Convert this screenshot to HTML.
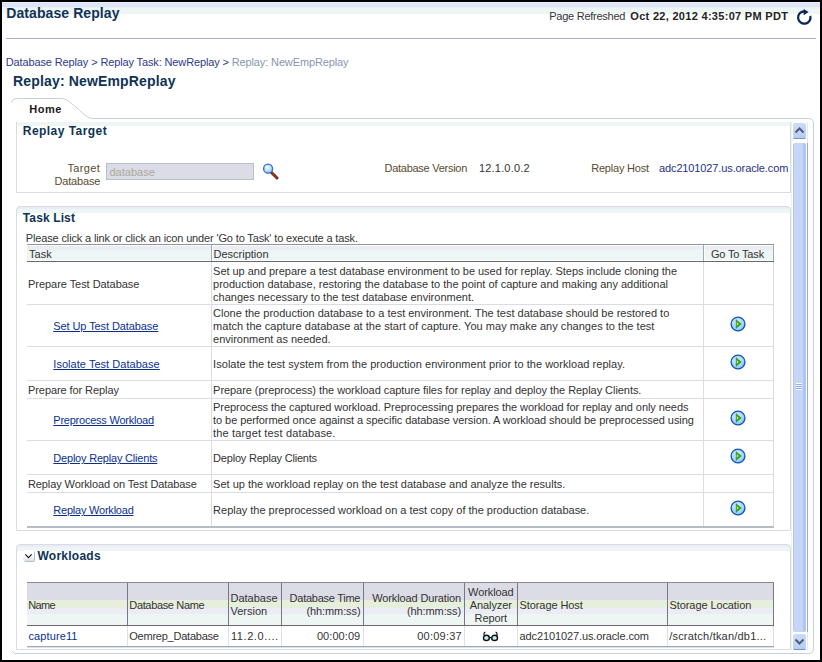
<!DOCTYPE html>
<html><head><meta charset="utf-8"><title>Database Replay</title>
<style>
html,body{margin:0;padding:0;}
body{width:822px;height:662px;overflow:hidden;position:relative;background:#fff;font-family:"Liberation Sans",sans-serif;}
.t{position:absolute;white-space:nowrap;}
#frame{position:absolute;left:0;top:0;width:822px;height:662px;box-sizing:border-box;border:2px solid #000;z-index:10;pointer-events:none}
</style></head><body>
<div style="position:absolute;left:2px;top:2px;width:818px;height:1px;background:#e9f0fb"></div>
<div style="position:absolute;left:2px;top:3px;width:818px;height:4px;background:#dde6f6"></div>
<div style="position:absolute;left:2px;top:7px;width:818px;height:1px;background:#eceef4"></div>
<div style="position:absolute;left:2px;top:8px;width:818px;height:6px;background:#eef6f4"></div>
<div class="t" style="left:6.30px;top:4.65px;font-size:14px;line-height:17px;font-weight:bold;color:#0e3356;letter-spacing:0.08px;">Database Replay</div>
<div class="t" style="left:549.20px;top:9.89px;font-size:11px;line-height:13px;font-weight:normal;color:#333340;letter-spacing:-0.25px;">Page Refreshed</div>
<div class="t" style="left:630.30px;top:9.89px;font-size:11px;line-height:13px;font-weight:bold;color:#222;letter-spacing:0.3px;">Oct 22, 2012 4:35:07 PM PDT</div>
<svg style="position:absolute;left:796px;top:9px" width="17" height="17" viewBox="0 0 17 17"><path d="M14.3 6.9 A6.2 6.2 0 1 1 8.3 2.3" fill="none" stroke="#0a2556" stroke-width="2.2"/><path d="M7.6 0 L12.6 3.1 L7.6 6.2 Z" fill="#0a2556"/></svg>
<div style="position:absolute;left:6px;top:38px;width:810px;height:1px;background:#aeaacc"></div>
<div class="t" style="left:5.80px;top:55.69px;font-size:11px;line-height:13px;font-weight:normal;color:#2e3a8c;letter-spacing:-0.13px;">Database Replay &gt; Replay Task: NewReplay &gt; <span style="color:#8a94b4">Replay: NewEmpReplay</span></div>
<div class="t" style="left:13.10px;top:72.85px;font-size:14px;line-height:17px;font-weight:bold;color:#0f3354;letter-spacing:0.15px;">Replay: NewEmpReplay</div>
<svg style="position:absolute;left:0;top:0" width="822" height="662" viewBox="0 0 822 662">
<path d="M11.5 102.5 Q12 98.5 16.5 98.5 L61 98.5 C66 98.5 70 102 77 108 C84 114 87 118.5 92.5 118.5 L808.5 118.5 Q813.5 118.5 813.5 123.5 L813.5 648.5 Q813.5 653.5 808.5 653.5 L14.5 653.5 L11.5 650.5" fill="none" stroke="#c5cfdd" stroke-width="1"/>
</svg>
<div class="t" style="left:29.30px;top:102.69px;font-size:11px;line-height:13px;font-weight:bold;color:#1a1a1a;letter-spacing:0.5px;">Home</div>
<div style="position:absolute;left:16px;top:122px;width:773px;height:69px;border:1px solid #d8dae6;background:linear-gradient(#ececf6 0,#ececf6 0px,#eef5f5 0px,#eef5f5 3px,#fff 3px)"></div>
<div style="position:absolute;left:17px;top:122px;width:773px;height:1px;background:#eef5f5"></div>
<div class="t" style="left:22.80px;top:123.64px;font-size:12px;line-height:14px;font-weight:bold;color:#0f3354;letter-spacing:0.45px;">Replay Target</div>
<div class="t" style="right:721.80px;top:161.89px;font-size:11px;line-height:13px;font-weight:normal;color:#5a4a32;letter-spacing:0.36px;">Target</div>
<div class="t" style="right:721.80px;top:174.89px;font-size:11px;line-height:13px;font-weight:normal;color:#5a4a32;letter-spacing:-0.17px;">Database</div>
<div style="position:absolute;left:106px;top:163px;width:148px;height:17px;box-sizing:border-box;border:1px solid #b7bfcb;background:#dcdce6"></div>
<div class="t" style="left:109.50px;top:165.89px;font-size:11px;line-height:13px;font-weight:normal;color:#aca89e;letter-spacing:0px;">database</div>
<svg style="position:absolute;left:260px;top:160px" width="20" height="20" viewBox="0 0 20 20"><defs><radialGradient id="mg" cx="0.4" cy="0.35" r="0.7"><stop offset="0" stop-color="#f4faff"/><stop offset="1" stop-color="#8cc4f0"/></radialGradient></defs><line x1="11.5" y1="12.5" x2="17" y2="18" stroke="#7a2a14" stroke-width="3" stroke-linecap="round"/><line x1="12" y1="13" x2="16.5" y2="17.5" stroke="#c07050" stroke-width="0.8" stroke-dasharray="1 1"/><circle cx="8.1" cy="8.7" r="4.5" fill="url(#mg)" stroke="#2f6ccc" stroke-width="1.3"/></svg>
<div class="t" style="left:384.50px;top:161.89px;font-size:11px;line-height:13px;font-weight:normal;color:#5a4a32;letter-spacing:-0.27px;">Database Version</div>
<div class="t" style="left:479.00px;top:161.89px;font-size:11px;line-height:13px;font-weight:normal;color:#333;letter-spacing:0.18px;">12.1.0.0.2</div>
<div class="t" style="left:591.20px;top:161.89px;font-size:11px;line-height:13px;font-weight:normal;color:#5a4a32;letter-spacing:-0.2px;">Replay Host</div>
<div class="t" style="left:659.00px;top:161.89px;font-size:11px;line-height:13px;font-weight:normal;color:#1f3286;letter-spacing:-0.12px;">adc2101027.us.oracle.com</div>
<div style="position:absolute;left:16px;top:206px;width:773px;height:323px;border:1px solid #d8dae6;border-radius:4px 4px 0 0;background:linear-gradient(#ececf6 0,#ececf6 2px,#eef5f5 2px,#eef5f5 6px,#fff 6px)"></div>
<div class="t" style="left:22.80px;top:210.84px;font-size:12px;line-height:14px;font-weight:bold;color:#0f3354;letter-spacing:0.12px;">Task List</div>
<div class="t" style="left:25.80px;top:231.69px;font-size:11px;line-height:13px;font-weight:normal;color:#333;letter-spacing:-0.144px;">Please click a link or click an icon under &#x27;Go to Task&#x27; to execute a task.</div>
<div style="position:absolute;left:27px;top:244px;width:747px;height:1px;background:#8d9794"></div>
<div style="position:absolute;left:27px;top:245px;width:747px;height:1px;background:#ffffff"></div>
<div style="position:absolute;left:27px;top:246px;width:747px;height:4px;background:#ececf4"></div>
<div style="position:absolute;left:27px;top:250px;width:747px;height:10px;background:#eef5f5"></div>
<div style="position:absolute;left:27px;top:260px;width:747px;height:1px;background:#ffffff"></div>
<div style="position:absolute;left:212px;top:245px;width:1px;height:16px;background:#fff"></div>
<div style="position:absolute;left:704px;top:245px;width:1px;height:16px;background:#fff"></div>
<div style="position:absolute;left:27px;top:261px;width:747px;height:1px;background:#6c6679"></div>
<div style="position:absolute;left:211px;top:245px;width:1px;height:16px;background:#a8a8b8"></div>
<div style="position:absolute;left:703px;top:245px;width:1px;height:16px;background:#a8a8b8"></div>
<div style="position:absolute;left:773px;top:245px;width:1px;height:16px;background:#a8a8b8"></div>
<div class="t" style="left:29.10px;top:247.59px;font-size:11px;line-height:13px;font-weight:normal;color:#333;letter-spacing:0px;">Task</div>
<div class="t" style="left:213.50px;top:247.59px;font-size:11px;line-height:13px;font-weight:normal;color:#333;letter-spacing:0px;">Description</div>
<div class="t" style="left:710.90px;top:247.59px;font-size:11px;line-height:13px;font-weight:normal;color:#333;letter-spacing:-0.15px;">Go To Task</div>
<div style="position:absolute;left:27px;top:304px;width:747px;height:1px;background:#dcdce6"></div>
<div style="position:absolute;left:211px;top:262px;width:1px;height:42px;background:#dcdce6"></div>
<div style="position:absolute;left:703px;top:262px;width:1px;height:42px;background:#dcdce6"></div>
<div style="position:absolute;left:773px;top:262px;width:1px;height:42px;background:#dcdce6"></div>
<div class="t" style="left:28.00px;top:277.99px;font-size:11px;line-height:13px;font-weight:normal;color:#333;letter-spacing:-0.045px;">Prepare Test Database</div>
<div class="t" style="left:213.10px;top:264.99px;font-size:11px;line-height:13px;font-weight:normal;color:#333;letter-spacing:-0.032px;">Set up and prepare a test database environment to be used for replay. Steps include cloning the</div>
<div class="t" style="left:213.10px;top:277.99px;font-size:11px;line-height:13px;font-weight:normal;color:#333;letter-spacing:-0.008px;">production database, restoring the database to the point of capture and making any additional</div>
<div class="t" style="left:213.10px;top:290.99px;font-size:11px;line-height:13px;font-weight:normal;color:#333;letter-spacing:-0.004px;">changes necessary to the test database environment.</div>
<div style="position:absolute;left:27px;top:346px;width:747px;height:1px;background:#dcdce6"></div>
<div style="position:absolute;left:211px;top:305px;width:1px;height:41px;background:#dcdce6"></div>
<div style="position:absolute;left:703px;top:305px;width:1px;height:41px;background:#dcdce6"></div>
<div style="position:absolute;left:773px;top:305px;width:1px;height:41px;background:#dcdce6"></div>
<div class="t" style="left:53.30px;top:320.49px;font-size:11px;line-height:13px;font-weight:normal;color:#0b2f8f;letter-spacing:-0.09px;text-decoration:underline;">Set Up Test Database</div>
<div class="t" style="left:213.10px;top:307.49px;font-size:11px;line-height:13px;font-weight:normal;color:#333;letter-spacing:0.002px;">Clone the production database to a test environment. The test database should be restored to</div>
<div class="t" style="left:213.10px;top:320.49px;font-size:11px;line-height:13px;font-weight:normal;color:#333;letter-spacing:0.033px;">match the capture database at the start of capture. You may make any changes to the test</div>
<div class="t" style="left:213.10px;top:333.49px;font-size:11px;line-height:13px;font-weight:normal;color:#333;letter-spacing:-0.026px;">environment as needed.</div>
<svg style="position:absolute;left:728.7px;top:314.5px" width="18" height="18" viewBox="0 0 18 18"><defs><radialGradient id="g305" cx="0.45" cy="0.4" r="0.65"><stop offset="0" stop-color="#e4f4ff"/><stop offset="0.7" stop-color="#9ad2f6"/><stop offset="1" stop-color="#78bcf0"/></radialGradient></defs><circle cx="9.4" cy="9.5" r="7.2" fill="#a0a8b8" opacity="0.35"/><circle cx="9" cy="9" r="6.9" fill="url(#g305)" stroke="#1452c4" stroke-width="1.3"/><path d="M7.1 4.7 L12.3 9 L7.1 13.3 Z" fill="#3aa61c" stroke="#1f7c12" stroke-width="0.5"/><path d="M7.9 7.3 L9.6 8.9 L7.9 10.5 Z" fill="#d4f4c0"/></svg>
<div style="position:absolute;left:27px;top:380px;width:747px;height:1px;background:#dcdce6"></div>
<div style="position:absolute;left:211px;top:347px;width:1px;height:33px;background:#dcdce6"></div>
<div style="position:absolute;left:703px;top:347px;width:1px;height:33px;background:#dcdce6"></div>
<div style="position:absolute;left:773px;top:347px;width:1px;height:33px;background:#dcdce6"></div>
<div class="t" style="left:53.30px;top:358.49px;font-size:11px;line-height:13px;font-weight:normal;color:#0b2f8f;letter-spacing:0.04px;text-decoration:underline;">Isolate Test Database</div>
<div class="t" style="left:213.10px;top:358.49px;font-size:11px;line-height:13px;font-weight:normal;color:#333;letter-spacing:0.036px;">Isolate the test system from the production environment prior to the workload replay.</div>
<svg style="position:absolute;left:728.7px;top:352.5px" width="18" height="18" viewBox="0 0 18 18"><defs><radialGradient id="g347" cx="0.45" cy="0.4" r="0.65"><stop offset="0" stop-color="#e4f4ff"/><stop offset="0.7" stop-color="#9ad2f6"/><stop offset="1" stop-color="#78bcf0"/></radialGradient></defs><circle cx="9.4" cy="9.5" r="7.2" fill="#a0a8b8" opacity="0.35"/><circle cx="9" cy="9" r="6.9" fill="url(#g347)" stroke="#1452c4" stroke-width="1.3"/><path d="M7.1 4.7 L12.3 9 L7.1 13.3 Z" fill="#3aa61c" stroke="#1f7c12" stroke-width="0.5"/><path d="M7.9 7.3 L9.6 8.9 L7.9 10.5 Z" fill="#d4f4c0"/></svg>
<div style="position:absolute;left:27px;top:398px;width:747px;height:1px;background:#dcdce6"></div>
<div style="position:absolute;left:211px;top:381px;width:1px;height:17px;background:#dcdce6"></div>
<div style="position:absolute;left:703px;top:381px;width:1px;height:17px;background:#dcdce6"></div>
<div style="position:absolute;left:773px;top:381px;width:1px;height:17px;background:#dcdce6"></div>
<div class="t" style="left:28.00px;top:384.49px;font-size:11px;line-height:13px;font-weight:normal;color:#333;letter-spacing:-0.08px;">Prepare for Replay</div>
<div class="t" style="left:213.10px;top:384.49px;font-size:11px;line-height:13px;font-weight:normal;color:#333;letter-spacing:-0.052px;">Prepare (preprocess) the workload capture files for replay and deploy the Replay Clients.</div>
<div style="position:absolute;left:27px;top:440px;width:747px;height:1px;background:#dcdce6"></div>
<div style="position:absolute;left:211px;top:399px;width:1px;height:41px;background:#dcdce6"></div>
<div style="position:absolute;left:703px;top:399px;width:1px;height:41px;background:#dcdce6"></div>
<div style="position:absolute;left:773px;top:399px;width:1px;height:41px;background:#dcdce6"></div>
<div class="t" style="left:53.30px;top:414.49px;font-size:11px;line-height:13px;font-weight:normal;color:#0b2f8f;letter-spacing:-0.23px;text-decoration:underline;">Preprocess Workload</div>
<div class="t" style="left:213.10px;top:401.49px;font-size:11px;line-height:13px;font-weight:normal;color:#333;letter-spacing:-0.069px;">Preprocess the captured workload. Preprocessing prepares the workload for replay and only needs</div>
<div class="t" style="left:213.10px;top:414.49px;font-size:11px;line-height:13px;font-weight:normal;color:#333;letter-spacing:-0.075px;">to be performed once against a specific database version. A workload should be preprocessed using</div>
<div class="t" style="left:213.10px;top:427.49px;font-size:11px;line-height:13px;font-weight:normal;color:#333;letter-spacing:0.154px;">the target test database.</div>
<svg style="position:absolute;left:728.7px;top:408.5px" width="18" height="18" viewBox="0 0 18 18"><defs><radialGradient id="g399" cx="0.45" cy="0.4" r="0.65"><stop offset="0" stop-color="#e4f4ff"/><stop offset="0.7" stop-color="#9ad2f6"/><stop offset="1" stop-color="#78bcf0"/></radialGradient></defs><circle cx="9.4" cy="9.5" r="7.2" fill="#a0a8b8" opacity="0.35"/><circle cx="9" cy="9" r="6.9" fill="url(#g399)" stroke="#1452c4" stroke-width="1.3"/><path d="M7.1 4.7 L12.3 9 L7.1 13.3 Z" fill="#3aa61c" stroke="#1f7c12" stroke-width="0.5"/><path d="M7.9 7.3 L9.6 8.9 L7.9 10.5 Z" fill="#d4f4c0"/></svg>
<div style="position:absolute;left:27px;top:474px;width:747px;height:1px;background:#dcdce6"></div>
<div style="position:absolute;left:211px;top:441px;width:1px;height:33px;background:#dcdce6"></div>
<div style="position:absolute;left:703px;top:441px;width:1px;height:33px;background:#dcdce6"></div>
<div style="position:absolute;left:773px;top:441px;width:1px;height:33px;background:#dcdce6"></div>
<div class="t" style="left:53.30px;top:452.49px;font-size:11px;line-height:13px;font-weight:normal;color:#0b2f8f;letter-spacing:-0.2px;text-decoration:underline;">Deploy Replay Clients</div>
<div class="t" style="left:213.10px;top:452.49px;font-size:11px;line-height:13px;font-weight:normal;color:#333;letter-spacing:-0.21px;">Deploy Replay Clients</div>
<svg style="position:absolute;left:728.7px;top:446.5px" width="18" height="18" viewBox="0 0 18 18"><defs><radialGradient id="g441" cx="0.45" cy="0.4" r="0.65"><stop offset="0" stop-color="#e4f4ff"/><stop offset="0.7" stop-color="#9ad2f6"/><stop offset="1" stop-color="#78bcf0"/></radialGradient></defs><circle cx="9.4" cy="9.5" r="7.2" fill="#a0a8b8" opacity="0.35"/><circle cx="9" cy="9" r="6.9" fill="url(#g441)" stroke="#1452c4" stroke-width="1.3"/><path d="M7.1 4.7 L12.3 9 L7.1 13.3 Z" fill="#3aa61c" stroke="#1f7c12" stroke-width="0.5"/><path d="M7.9 7.3 L9.6 8.9 L7.9 10.5 Z" fill="#d4f4c0"/></svg>
<div style="position:absolute;left:27px;top:492px;width:747px;height:1px;background:#dcdce6"></div>
<div style="position:absolute;left:211px;top:475px;width:1px;height:17px;background:#dcdce6"></div>
<div style="position:absolute;left:703px;top:475px;width:1px;height:17px;background:#dcdce6"></div>
<div style="position:absolute;left:773px;top:475px;width:1px;height:17px;background:#dcdce6"></div>
<div class="t" style="left:28.00px;top:478.49px;font-size:11px;line-height:13px;font-weight:normal;color:#333;letter-spacing:-0.105px;">Replay Workload on Test Database</div>
<div class="t" style="left:213.10px;top:478.49px;font-size:11px;line-height:13px;font-weight:normal;color:#333;letter-spacing:-0.001px;">Set up the workload replay on the test database and analyze the results.</div>
<div style="position:absolute;left:27px;top:526px;width:747px;height:1px;background:#dcdce6"></div>
<div style="position:absolute;left:211px;top:493px;width:1px;height:33px;background:#dcdce6"></div>
<div style="position:absolute;left:703px;top:493px;width:1px;height:33px;background:#dcdce6"></div>
<div style="position:absolute;left:773px;top:493px;width:1px;height:33px;background:#dcdce6"></div>
<div class="t" style="left:53.30px;top:504.49px;font-size:11px;line-height:13px;font-weight:normal;color:#0b2f8f;letter-spacing:-0.22px;text-decoration:underline;">Replay Workload</div>
<div class="t" style="left:213.10px;top:504.49px;font-size:11px;line-height:13px;font-weight:normal;color:#333;letter-spacing:-0.015px;">Replay the preprocessed workload on a test copy of the production database.</div>
<svg style="position:absolute;left:728.7px;top:498.5px" width="18" height="18" viewBox="0 0 18 18"><defs><radialGradient id="g493" cx="0.45" cy="0.4" r="0.65"><stop offset="0" stop-color="#e4f4ff"/><stop offset="0.7" stop-color="#9ad2f6"/><stop offset="1" stop-color="#78bcf0"/></radialGradient></defs><circle cx="9.4" cy="9.5" r="7.2" fill="#a0a8b8" opacity="0.35"/><circle cx="9" cy="9" r="6.9" fill="url(#g493)" stroke="#1452c4" stroke-width="1.3"/><path d="M7.1 4.7 L12.3 9 L7.1 13.3 Z" fill="#3aa61c" stroke="#1f7c12" stroke-width="0.5"/><path d="M7.9 7.3 L9.6 8.9 L7.9 10.5 Z" fill="#d4f4c0"/></svg>
<div style="position:absolute;left:27px;top:526px;width:747px;height:2px;background:#b8bcc8"></div>
<div style="position:absolute;left:16px;top:544px;width:773px;height:104px;border:1px solid #d8dae6;border-radius:4px 4px 0 0;background:linear-gradient(#ececf6 0,#ececf6 2px,#eef5f5 2px,#eef5f5 6px,#fff 6px)"></div>
<div style="position:absolute;left:23px;top:550px;width:11px;height:11px;border-radius:2px;background:linear-gradient(#fff 0,#fff 55%,#d8dde6 100%);box-shadow:1px 1px 0 #b4c0d0"></div>
<svg style="position:absolute;left:23px;top:550px" width="11" height="11" viewBox="0 0 11 11"><path d="M2.3 4.3 L5.5 7.6 L8.7 4.3" fill="none" stroke="#111" stroke-width="1.15"/></svg>
<div class="t" style="left:37.50px;top:548.64px;font-size:12px;line-height:14px;font-weight:bold;color:#0f3354;letter-spacing:0.25px;">Workloads</div>
<div style="position:absolute;left:27px;top:582px;width:747px;height:1px;background:#8a8a90"></div>
<div style="position:absolute;left:27px;top:583px;width:747px;height:17px;background:#dcdce6"></div>
<div style="position:absolute;left:27px;top:600px;width:747px;height:8px;background:#e6eedc"></div>
<div style="position:absolute;left:27px;top:608px;width:747px;height:6px;background:#ececf4"></div>
<div style="position:absolute;left:27px;top:614px;width:747px;height:11px;background:#eef6f4"></div>
<div style="position:absolute;left:27px;top:625px;width:747px;height:1px;background:#6c6679"></div>
<div style="position:absolute;left:127px;top:583px;width:1px;height:42px;background:#7a7488"></div>
<div style="position:absolute;left:127px;top:626px;width:1px;height:20px;background:#e0e0ea"></div>
<div style="position:absolute;left:228px;top:583px;width:1px;height:42px;background:#7a7488"></div>
<div style="position:absolute;left:228px;top:626px;width:1px;height:20px;background:#e0e0ea"></div>
<div style="position:absolute;left:281px;top:583px;width:1px;height:42px;background:#7a7488"></div>
<div style="position:absolute;left:281px;top:626px;width:1px;height:20px;background:#e0e0ea"></div>
<div style="position:absolute;left:363px;top:583px;width:1px;height:42px;background:#7a7488"></div>
<div style="position:absolute;left:363px;top:626px;width:1px;height:20px;background:#e0e0ea"></div>
<div style="position:absolute;left:464px;top:583px;width:1px;height:42px;background:#7a7488"></div>
<div style="position:absolute;left:464px;top:626px;width:1px;height:20px;background:#e0e0ea"></div>
<div style="position:absolute;left:517px;top:583px;width:1px;height:42px;background:#7a7488"></div>
<div style="position:absolute;left:517px;top:626px;width:1px;height:20px;background:#e0e0ea"></div>
<div style="position:absolute;left:667px;top:583px;width:1px;height:42px;background:#7a7488"></div>
<div style="position:absolute;left:667px;top:626px;width:1px;height:20px;background:#e0e0ea"></div>
<div style="position:absolute;left:773px;top:583px;width:1px;height:42px;background:#7a7488"></div>
<div style="position:absolute;left:773px;top:626px;width:1px;height:20px;background:#e0e0ea"></div>
<div style="position:absolute;left:27px;top:646px;width:747px;height:1px;background:#a4a8b4"></div>
<div style="position:absolute;left:27px;top:647px;width:747px;height:1px;background:#dde0e8"></div>
<div class="t" style="left:28.30px;top:598.69px;font-size:11px;line-height:13px;font-weight:normal;color:#333;letter-spacing:-0.7px;">Name</div>
<div class="t" style="left:129.30px;top:598.69px;font-size:11px;line-height:13px;font-weight:normal;color:#333;letter-spacing:-0.35px;">Database Name</div>
<div class="t" style="left:230.50px;top:591.69px;font-size:11px;line-height:13px;font-weight:normal;color:#333;letter-spacing:0px;">Database</div>
<div class="t" style="left:230.50px;top:604.69px;font-size:11px;line-height:13px;font-weight:normal;color:#333;letter-spacing:0px;">Version</div>
<div class="t" style="right:461.80px;top:591.69px;font-size:11px;line-height:13px;font-weight:normal;color:#333;letter-spacing:-0.26px;">Database Time</div>
<div class="t" style="right:461.50px;top:604.69px;font-size:11px;line-height:13px;font-weight:normal;color:#333;letter-spacing:-0.1px;">(hh:mm:ss)</div>
<div class="t" style="right:361.00px;top:591.69px;font-size:11px;line-height:13px;font-weight:normal;color:#333;letter-spacing:-0.12px;">Workload Duration</div>
<div class="t" style="right:361.00px;top:604.69px;font-size:11px;line-height:13px;font-weight:normal;color:#333;letter-spacing:-0.1px;">(hh:mm:ss)</div>
<div class="t" style="left:340.80px;width:300px;text-align:center;top:585.89px;font-size:11px;line-height:13px;font-weight:normal;color:#333;letter-spacing:-0.1px;">Workload</div>
<div class="t" style="left:340.80px;width:300px;text-align:center;top:598.79px;font-size:11px;line-height:13px;font-weight:normal;color:#333;letter-spacing:-0.1px;">Analyzer</div>
<div class="t" style="left:340.80px;width:300px;text-align:center;top:611.69px;font-size:11px;line-height:13px;font-weight:normal;color:#333;letter-spacing:-0.1px;">Report</div>
<div class="t" style="left:519.60px;top:598.69px;font-size:11px;line-height:13px;font-weight:normal;color:#333;letter-spacing:-0.1px;">Storage Host</div>
<div class="t" style="left:669.60px;top:598.69px;font-size:11px;line-height:13px;font-weight:normal;color:#333;letter-spacing:-0.1px;">Storage Location</div>
<div class="t" style="left:28.50px;top:629.69px;font-size:11px;line-height:13px;font-weight:normal;color:#0b2f8f;letter-spacing:0.1px;">capture11</div>
<div class="t" style="left:129.30px;top:629.69px;font-size:11px;line-height:13px;font-weight:normal;color:#333;letter-spacing:-0.236px;">Oemrep_Database</div>
<div class="t" style="left:231.00px;top:629.69px;font-size:11px;line-height:13px;font-weight:normal;color:#333;letter-spacing:0.57px;">11.2.0....</div>
<div class="t" style="right:461.70px;top:629.69px;font-size:11px;line-height:13px;font-weight:normal;color:#333;letter-spacing:0.07px;">00:00:09</div>
<div class="t" style="right:360.00px;top:629.69px;font-size:11px;line-height:13px;font-weight:normal;color:#333;letter-spacing:0.25px;">00:09:37</div>
<svg style="position:absolute;left:481px;top:630px" width="20" height="14" viewBox="0 0 20 14"><ellipse cx="5.4" cy="7.9" rx="2.9" ry="2.6" fill="#bdeef5" stroke="#111" stroke-width="1.4"/><ellipse cx="13.6" cy="7.9" rx="2.9" ry="2.6" fill="#bdeef5" stroke="#111" stroke-width="1.4"/><path d="M8.3 7.6 L10.7 7.6" stroke="#111" stroke-width="1.2"/><path d="M3 5.6 Q2.6 2.4 4.4 2.2 M16 5.6 Q16.4 2.4 14.6 2.2" fill="none" stroke="#111" stroke-width="1.2"/></svg>
<div class="t" style="left:519.60px;top:629.69px;font-size:11px;line-height:13px;font-weight:normal;color:#333;letter-spacing:-0.12px;">adc2101027.us.oracle.com</div>
<div class="t" style="left:669.20px;top:629.69px;font-size:11px;line-height:13px;font-weight:normal;color:#333;letter-spacing:0.21px;">/scratch/tkan/db1...</div>
<div style="position:absolute;left:791px;top:122px;width:1px;height:528px;background:#eef4e4"></div>
<div style="position:absolute;left:807px;top:122px;width:1px;height:21px;background:#e4e8ee"></div>
<div style="position:absolute;left:807px;top:632px;width:1px;height:18px;background:#e4e8ee"></div>
<div style="position:absolute;left:792px;top:122px;width:15px;height:17px;box-sizing:border-box;border:1px solid #fff;border-bottom:1px solid #7494d0;border-radius:3px;background:linear-gradient(160deg,#d0defa,#b4caf4)"></div>
<svg style="position:absolute;left:792px;top:122px" width="15" height="17" viewBox="0 0 15 17"><path d="M3.5 10.5 L7.5 6.5 L11.5 10.5" fill="none" stroke="#4d5d7a" stroke-width="2"/></svg>
<div style="position:absolute;left:793px;top:143px;width:13px;height:489px;border-radius:2px 2px 2px 2px;background:linear-gradient(90deg,#b0c8f6 0,#b0c8f6 1px,#c6d6f6 1px,#c6d6f6 10px,#adc6f6 10px,#adc6f6 13px)"></div>
<div style="position:absolute;left:807px;top:143px;width:1px;height:489px;background:#9aaad0"></div>
<div style="position:absolute;left:796px;top:383px;width:6px;height:7px;background:repeating-linear-gradient(#fff 0,#fff 1px,#8fb0ec 1px,#8fb0ec 2px)"></div>
<div style="position:absolute;left:792px;top:633px;width:15px;height:17px;box-sizing:border-box;border:1px solid #fff;border-bottom:1px solid #7494d0;border-radius:3px;background:linear-gradient(160deg,#d0defa,#b4caf4)"></div>
<svg style="position:absolute;left:792px;top:633px" width="15" height="17" viewBox="0 0 15 17"><path d="M3.5 6.5 L7.5 10.5 L11.5 6.5" fill="none" stroke="#4d5d7a" stroke-width="2"/></svg>
<div id="frame"></div>
</body></html>
